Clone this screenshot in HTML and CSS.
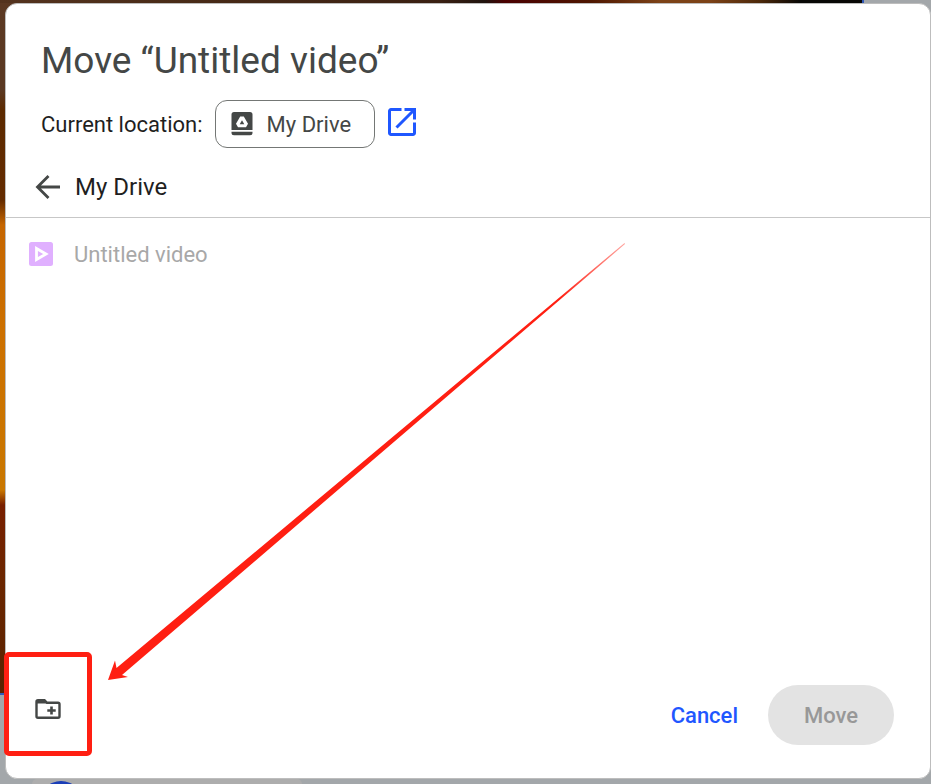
FILE: index.html
```
<!DOCTYPE html>
<html lang="en">
<head>
	<meta charset="utf-8">
	<title>Move file</title>
	<link rel="stylesheet" href="styles.css">
</head>
<body>
	<div class="backdrop">
		<div class="photo"></div>
		<div class="sheet"><span class="dot"></span></div>
	</div>
	<div class="dialog" role="dialog" aria-labelledby="dialogTitle">
		<h1 class="title" id="dialogTitle">Move “Untitled video”</h1>
		<div class="location">
			<span class="locationLabel">Current location:</span>
			<button type="button" class="chip">
				<svg width="22" height="24" viewBox="0 0 22 24">
					<path fill="#444746" fill-rule="evenodd" d="M3 0h16a2.500 2.500 0 0 1 2.500 2.500V18H.5V2.500A2.500 2.500 0 0 1 3 0zM9.200 4.500 5 11.700 7 15.200h8l2-3.500-4.200-7.200z"/>
					<path fill="#444746" d="M11 8.200 13.300 12.200H8.700zM.5 19.700h21v1a2.500 2.500 0 0 1-2.500 2.500H3a2.500 2.500 0 0 1-2.500-2.500z"/>
				</svg>
				<span>My Drive</span>
			</button>
			<a href="#" class="openLink" aria-label="Open in new tab">
				<svg width="28" height="28" viewBox="0 0 28 28" fill="none" stroke="#1f57ff" stroke-width="3">
					<path stroke-linejoin="round" d="M13.500 1.500H3A1.500 1.500 0 0 0 1.500 3v22A1.500 1.500 0 0 0 3 26.500h22a1.500 1.500 0 0 0 1.500-1.500V14.500"/>
					<path d="M16.500 1.500h10v10M26 2 8.500 19.500"/>
				</svg>
			</a>
		</div>
		<div class="breadcrumb">
			<button type="button" class="back" aria-label="Back">
				<svg width="26" height="26" viewBox="0 0 26 26" fill="none" stroke="#444746" stroke-width="2.800">
					<path d="M25 13H3M13.500 2 2.500 13l11 11"/>
				</svg>
			</button>
			<span>My Drive</span>
		</div>
		<ul class="files">
			<li class="file">
				<svg width="24" height="24" viewBox="0 0 24 24">
					<rect width="24" height="24" rx="2.500" fill="#e0b0ff"/>
					<path d="M7.500 6.500v11L17 12z" fill="none" stroke="#fff" stroke-width="2.800"/>
				</svg>
				<span>Untitled video</span>
			</li>
		</ul>
		<div class="footer">
			<button type="button" class="newFolder" aria-label="New folder">
				<svg width="26" height="22" viewBox="0 0 26 22">
					<path fill="none" stroke="#444746" stroke-width="2.400" d="M3 2.200h6.500l2.500 2.600h11A1.500 1.500 0 0 1 24.500 6.300v12a1.500 1.500 0 0 1-1.500 1.500H3a1.500 1.500 0 0 1-1.500-1.500v-14.600A1.500 1.500 0 0 1 3 2.200z"/>
					<path fill="#444746" d="M2 2h7.500l3 3.500H2zM15.200 8.500h2.600v2.700h2.900v2.600h-2.900v2.700h-2.600v-2.700h-2.900v-2.600h2.900z"/>
				</svg>
			</button>
			<button type="button" class="cancel">Cancel</button>
			<button type="button" class="move" disabled>Move</button>
		</div>
	</div>
	<!-- annotations drawn over the dialog -->
	<div class="highlight"></div>
	<svg class="arrow" width="518" height="438" viewBox="0 0 518 438">
		<defs>
			<linearGradient id="fade" gradientUnits="userSpaceOnUse" x1="516" y1="1" x2="450" y2="56">
				<stop offset="0" stop-color="#ff1f12" stop-opacity=".4"/>
				<stop offset="1" stop-color="#ff1f12"/>
			</linearGradient>
		</defs>
		<path fill="url(#fade)" d="M0 438 7 418.500 8.500 426 516.500 1 517 2 14 433 20 435z"/>
	</svg>
</body>
</html>
```
FILE: styles.css
```
*{
	box-sizing:border-box;
}
body{
	margin:0;
	min-height:100vh;
	display:flex;
	padding:3px 0 5px 5px;
	background:#a3a7aa;
	font-family:Roboto, sans-serif;
	color:#1f1f1f;
}
button{
	font-family:inherit;
	border:0;
	padding:0;
	background:none;
}
svg{
	display:block;
	flex:none;
}
/* page behind the dialog */
.backdrop{
	position:absolute;
	inset:0;
	overflow:hidden;
	z-index:-1;
}
.photo{
	height:695px;
	margin-right:67px;
	border-right:2px solid #3058b8;
	border-bottom:2px solid #3058b8;
	background:
		linear-gradient(90deg, #54331e 0, #4a2c18 160px, #3a2012 440px, #20130e 485px, #4a0000 505px, #4e1600 590px, #7c4217 660px, #7c4217 710px, #4c280a 760px, #080705 800px) 0 0 / 100% 3px no-repeat,
		linear-gradient(#5b3822 0, #5a3822 90px, #5c2a00 110px, #642b00 200px, #c56500 225px, #cc7000 330px, #c97700 490px, #781f00 505px, #6b2600 580px, #592200 100%);
}
.sheet{
	position:absolute;
	left:32px;
	bottom:0;
	width:270px;
	height:5px;
	border-radius:8px 8px 0 0;
	background:#adadad;
	overflow:hidden;
}
.dot{
	display:block;
	width:44px;
	height:44px;
	margin:2px 0 0 7px;
	border-radius:50%;
	background:#1a3eb8;
}
.dialog{
	flex:1;
	display:flex;
	flex-direction:column;
	background:#fff;
	border:1px solid #bdbdbd;
	border-radius:12px;
}
.title{
	margin:33px 35px 15px;
	font-size:37px;
	line-height:48px;
	font-weight:400;
	color:#444746;
}
.location{
	display:flex;
	align-items:center;
	margin:0 35px;
	font-size:22px;
}
.locationLabel{
	margin-right:12px;
}
.chip{
	display:flex;
	align-items:center;
	gap:14px;
	width:160px;
	height:48px;
	padding:0 15px;
	border:1px solid #747775;
	border-radius:12px;
	font-size:22px;
	color:#444746;
}
.openLink{
	margin:0 13px 4px;
}
.breadcrumb{
	display:flex;
	align-items:center;
	gap:14px;
	height:70px;
	padding:8px 29px 0;
	border-bottom:1px solid #c7c7c7;
	font-size:24px;
}
.files{
	flex:1;
	margin:0;
	padding:0;
	list-style:none;
}
.file{
	display:flex;
	align-items:center;
	gap:21px;
	height:72px;
	padding:0 23px;
	font-size:22px;
	color:#a8a8a8;
}
.footer{
	display:flex;
	align-items:center;
	padding:0 36px 33px 29px;
}
.newFolder{
	margin:0 auto 12px 0;
}
.cancel{
	margin-right:30px;
	font-size:22px;
	font-weight:500;
	color:#1f57ff;
}
.move{
	width:126px;
	height:60px;
	border-radius:30px;
	background:#e3e3e3;
	font-size:22px;
	font-weight:500;
	color:#989898;
}
.highlight{
	position:absolute;
	left:4px;
	bottom:28px;
	width:88px;
	height:104px;
	border:5px solid #ff1f12;
	border-radius:5px;
}
.arrow{
	position:absolute;
	left:108px;
	top:242px;
	pointer-events:none;
}
```
